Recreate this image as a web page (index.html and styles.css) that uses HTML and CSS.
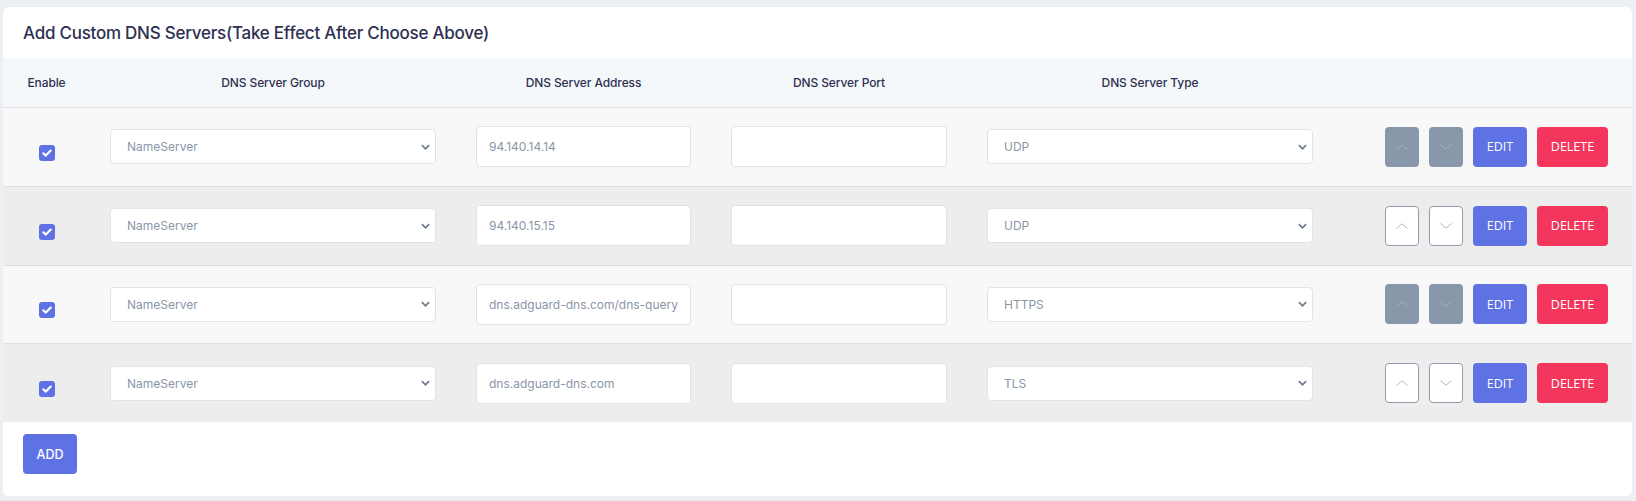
FILE: index.html
```html
<!DOCTYPE html>
<html lang="en">
<head>
<meta charset="utf-8">
<title>Custom DNS Servers</title>
<link rel="stylesheet" href="styles.css">
</head>
<body>
<div class="page">
  <div class="card">
    <div class="card-title">Add Custom DNS Servers(Take Effect After Choose Above)</div>
    <div class="table">
      <div class="row head">
        <div class="cell">Enable</div>
        <div class="cell">DNS Server Group</div>
        <div class="cell">DNS Server Address</div>
        <div class="cell">DNS Server Port</div>
        <div class="cell">DNS Server Type</div>
        <div class="cell"></div>
      </div>

      <div class="row light">
        <div class="cell"><span class="check"><svg viewBox="0 0 16 16" width="16" height="16"><path d="M4.3 8.3 L6.8 10.6 L11.7 5.6" fill="none" stroke="#fff" stroke-width="2.2" stroke-linecap="round" stroke-linejoin="round"/></svg></span></div>
        <div class="cell"><div class="select"><span>NameServer</span><svg class="sel-chev" viewBox="0 0 10 6" width="9" height="6"><path d="M1 1 L5 5 L9 1" fill="none" stroke="#6f7d90" stroke-width="2"/></svg></div></div>
        <div class="cell"><input class="input" type="text" value="94.140.14.14" readonly></div>
        <div class="cell"><input class="input" type="text" value="" readonly></div>
        <div class="cell"><div class="select"><span>UDP</span><svg class="sel-chev" viewBox="0 0 10 6" width="9" height="6"><path d="M1 1 L5 5 L9 1" fill="none" stroke="#6f7d90" stroke-width="2"/></svg></div></div>
        <div class="cell actions">
          <span class="btn arrow off"><svg viewBox="0 0 12 6" width="12" height="6"><path d="M0.5 5.5 L6 0.8 L11.5 5.5" fill="none" stroke="#a7b2c0" stroke-width="1"/></svg></span>
          <span class="btn arrow off"><svg viewBox="0 0 12 6" width="12" height="6"><path d="M0.5 0.5 L6 5.2 L11.5 0.5" fill="none" stroke="#a7b2c0" stroke-width="1"/></svg></span>
          <span class="btn edit">EDIT</span>
          <span class="btn del">DELETE</span>
        </div>
      </div>

      <div class="row dark">
        <div class="cell"><span class="check"><svg viewBox="0 0 16 16" width="16" height="16"><path d="M4.3 8.3 L6.8 10.6 L11.7 5.6" fill="none" stroke="#fff" stroke-width="2.2" stroke-linecap="round" stroke-linejoin="round"/></svg></span></div>
        <div class="cell"><div class="select"><span>NameServer</span><svg class="sel-chev" viewBox="0 0 10 6" width="9" height="6"><path d="M1 1 L5 5 L9 1" fill="none" stroke="#6f7d90" stroke-width="2"/></svg></div></div>
        <div class="cell"><input class="input" type="text" value="94.140.15.15" readonly></div>
        <div class="cell"><input class="input" type="text" value="" readonly></div>
        <div class="cell"><div class="select"><span>UDP</span><svg class="sel-chev" viewBox="0 0 10 6" width="9" height="6"><path d="M1 1 L5 5 L9 1" fill="none" stroke="#6f7d90" stroke-width="2"/></svg></div></div>
        <div class="cell actions">
          <span class="btn arrow on"><svg viewBox="0 0 12 6" width="12" height="6"><path d="M0.5 5.5 L6 0.8 L11.5 5.5" fill="none" stroke="#b3b7bd" stroke-width="1"/></svg></span>
          <span class="btn arrow on"><svg viewBox="0 0 12 6" width="12" height="6"><path d="M0.5 0.5 L6 5.2 L11.5 0.5" fill="none" stroke="#b3b7bd" stroke-width="1"/></svg></span>
          <span class="btn edit">EDIT</span>
          <span class="btn del">DELETE</span>
        </div>
      </div>

      <div class="row light">
        <div class="cell"><span class="check"><svg viewBox="0 0 16 16" width="16" height="16"><path d="M4.3 8.3 L6.8 10.6 L11.7 5.6" fill="none" stroke="#fff" stroke-width="2.2" stroke-linecap="round" stroke-linejoin="round"/></svg></span></div>
        <div class="cell"><div class="select"><span>NameServer</span><svg class="sel-chev" viewBox="0 0 10 6" width="9" height="6"><path d="M1 1 L5 5 L9 1" fill="none" stroke="#6f7d90" stroke-width="2"/></svg></div></div>
        <div class="cell"><input class="input" type="text" value="dns.adguard-dns.com/dns-query" readonly></div>
        <div class="cell"><input class="input" type="text" value="" readonly></div>
        <div class="cell"><div class="select"><span>HTTPS</span><svg class="sel-chev" viewBox="0 0 10 6" width="9" height="6"><path d="M1 1 L5 5 L9 1" fill="none" stroke="#6f7d90" stroke-width="2"/></svg></div></div>
        <div class="cell actions">
          <span class="btn arrow off"><svg viewBox="0 0 12 6" width="12" height="6"><path d="M0.5 5.5 L6 0.8 L11.5 5.5" fill="none" stroke="#a7b2c0" stroke-width="1"/></svg></span>
          <span class="btn arrow off"><svg viewBox="0 0 12 6" width="12" height="6"><path d="M0.5 0.5 L6 5.2 L11.5 0.5" fill="none" stroke="#a7b2c0" stroke-width="1"/></svg></span>
          <span class="btn edit">EDIT</span>
          <span class="btn del">DELETE</span>
        </div>
      </div>

      <div class="row dark">
        <div class="cell"><span class="check"><svg viewBox="0 0 16 16" width="16" height="16"><path d="M4.3 8.3 L6.8 10.6 L11.7 5.6" fill="none" stroke="#fff" stroke-width="2.2" stroke-linecap="round" stroke-linejoin="round"/></svg></span></div>
        <div class="cell"><div class="select"><span>NameServer</span><svg class="sel-chev" viewBox="0 0 10 6" width="9" height="6"><path d="M1 1 L5 5 L9 1" fill="none" stroke="#6f7d90" stroke-width="2"/></svg></div></div>
        <div class="cell"><input class="input" type="text" value="dns.adguard-dns.com" readonly></div>
        <div class="cell"><input class="input" type="text" value="" readonly></div>
        <div class="cell"><div class="select"><span>TLS</span><svg class="sel-chev" viewBox="0 0 10 6" width="9" height="6"><path d="M1 1 L5 5 L9 1" fill="none" stroke="#6f7d90" stroke-width="2"/></svg></div></div>
        <div class="cell actions">
          <span class="btn arrow on"><svg viewBox="0 0 12 6" width="12" height="6"><path d="M0.5 5.5 L6 0.8 L11.5 5.5" fill="none" stroke="#b3b7bd" stroke-width="1"/></svg></span>
          <span class="btn arrow on"><svg viewBox="0 0 12 6" width="12" height="6"><path d="M0.5 0.5 L6 5.2 L11.5 0.5" fill="none" stroke="#b3b7bd" stroke-width="1"/></svg></span>
          <span class="btn edit">EDIT</span>
          <span class="btn del">DELETE</span>
        </div>
      </div>
    </div>
    <div class="card-foot">
      <span class="btn add">ADD</span>
    </div>
  </div>
</div>
</body>
</html>
```

FILE: styles.css
```css
* { box-sizing: border-box; }

html, body {
  margin: 0;
  padding: 0;
  background: #edf0f3;
  font-family: "Inter", "Noto Sans", sans-serif;
  color: #32325d;
}

.page {
  padding: 7px 4px 5px 3px;
}

.card {
  background: #fff;
  border-radius: 6px;
  overflow: hidden;
}

.card-title {
  height: 51px;
  display: flex;
  align-items: center;
  padding-left: 20px;
  font-size: 17px;
  font-weight: 500;
  color: #2e3052;
  letter-spacing: -0.25px;
}

.row {
  display: grid;
  grid-template-columns: 87px 366px 255px 256px 366px 1fr;
  align-items: center;
}

.row.head {
  height: 49px;
  background: #f5f8fb;
  font-size: 12px;
  font-weight: 500;
  color: #2f3150;
  letter-spacing: -0.1px;
}

.row.light,
.row.dark {
  height: 78.75px;
  border-top: 1px solid #dedfe2;
}

.row.light { background: #f8f8f8; }
.row.dark { background: #ededed; }

.cell {
  padding: 0 20px;
  display: flex;
  justify-content: center;
  align-items: center;
}

.row .cell:first-child { padding: 0; }

.check {
  width: 16px;
  height: 16px;
  border-radius: 3px;
  background: #5e72e4;
  display: flex;
  margin-top: 12px;
}

.select {
  width: 100%;
  height: 35px;
  background: #fff;
  border: 1px solid #e1e3e8;
  border-radius: 4px;
  display: flex;
  align-items: center;
  justify-content: space-between;
  padding: 0 5px 0 16px;
  font-size: 12px;
  color: #8a96a8;
}

.input {
  width: 100%;
  height: 41px;
  background: #fff;
  border: 1px solid #e1e3e8;
  border-radius: 4px;
  padding: 0 12px;
  font-family: "Inter", "Noto Sans", sans-serif;
  font-size: 12px;
  color: #8a96a8;
  outline: none;
}

.actions {
  justify-content: flex-end;
  gap: 10px;
  padding: 0 24px 0 0;
}

.btn {
  height: 40px;
  border-radius: 4px;
  display: flex;
  align-items: center;
  justify-content: center;
  font-family: "Open Sans", "Noto Sans", sans-serif;
  font-size: 12.5px;
  color: #fff;
}

.btn.arrow { width: 34px; }
.btn.arrow.off { background: #8898aa; }
.btn.arrow.on {
  background: #fff;
  border: 1px solid #8f9cb0;
}

.btn.edit { width: 54px; background: #5e72e4; }
.btn.del { width: 71px; background: #f5365c; }

.card-foot {
  padding: 12px 20px 22px;
  display: flex;
}

.btn.add {
  width: 54px;
  background: #5e72e4;
  font-family: "Inter", "Noto Sans", sans-serif;
  font-weight: 500;
  font-size: 12.5px;
}
```
